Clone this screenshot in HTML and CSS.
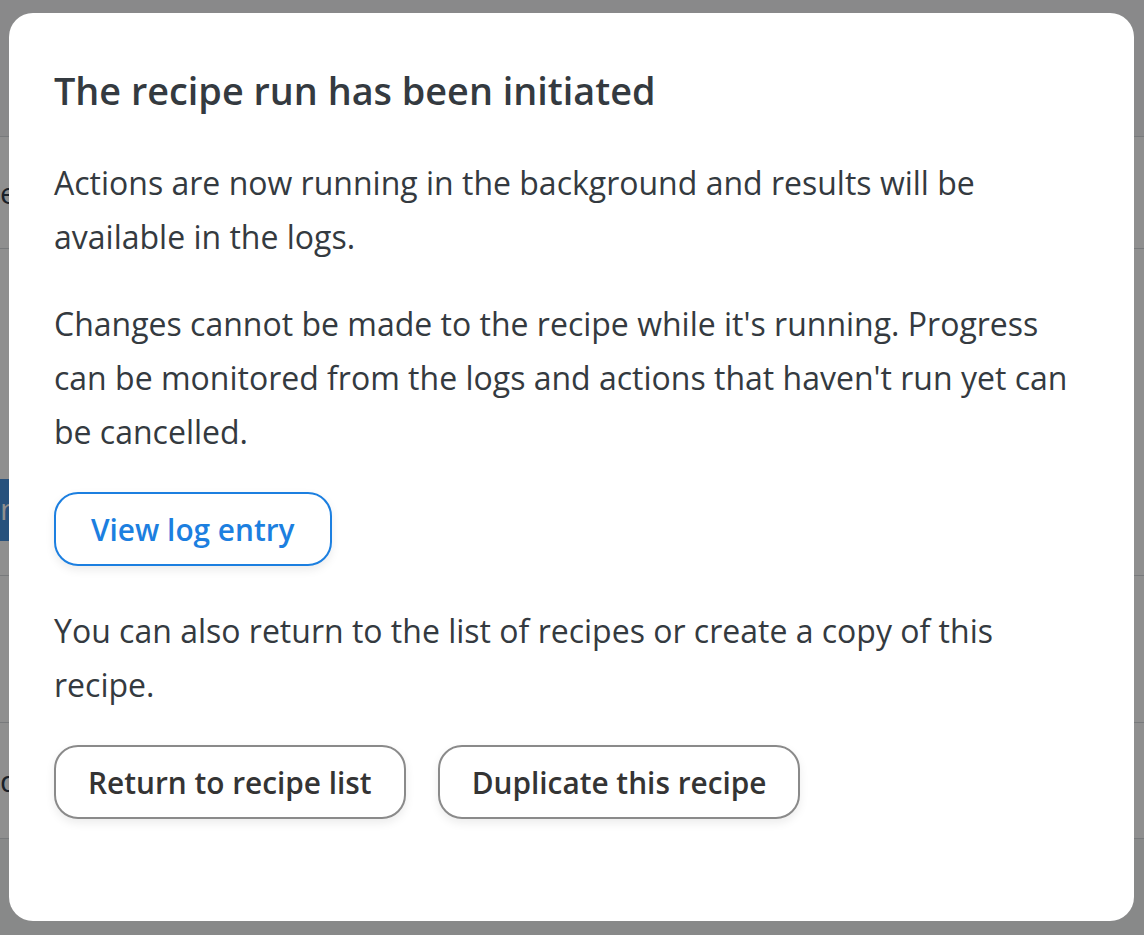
FILE: index.html
```html
<!DOCTYPE html>
<html lang="en">
<head>
<meta charset="utf-8">
<title>Recipe run initiated</title>
<link rel="stylesheet" href="styles.css">
</head>
<body>
<div class="page">
  <header class="topbar"></header>
  <section class="row row-a"><span class="row-text">e</span></section>
  <section class="row row-b"><span class="blue-btn">n</span></section>
  <section class="row row-c"></section>
  <section class="row row-d"><span class="row-text">d</span></section>
  <footer class="foot"></footer>
</div>
<div class="overlay"></div>
<div class="modal" role="dialog" aria-labelledby="dlg-title">
  <h2 id="dlg-title" class="modal-title">The recipe run has been initiated</h2>
  <p class="modal-text">Actions are now running in the background and results will be available in the logs.</p>
  <p class="modal-text">Changes cannot be made to the recipe while it's running. Progress can be monitored from the logs and actions that haven't run yet can be cancelled.</p>
  <div class="primary-row">
    <button class="btn btn-primary" type="button">View log entry</button>
  </div>
  <p class="modal-text">You can also return to the list of recipes or create a copy of this recipe.</p>
  <div class="btn-row">
    <button class="btn btn-secondary" type="button">Return to recipe list</button>
    <button class="btn btn-secondary" type="button">Duplicate this recipe</button>
  </div>
</div>
</body>
</html>
```
FILE: styles.css
```css
html, body {
  margin: 0;
  padding: 0;
  height: 100%;
}
body {
  font-family: "Open Sans", "Noto Sans", sans-serif;
  background: #ffffff;
  color: #343a40;
  overflow: hidden;
}
.page {
  display: flex;
  flex-direction: column;
  height: 935px;
}
.topbar {
  height: 136px;
  background: #f4f5f6;
  border-bottom: 1px solid #d7dadd;
  flex: none;
}
.row {
  flex: none;
  border-bottom: 1px solid #d7dadd;
  display: flex;
  box-sizing: border-box;
  font-size: 30px;
}
.row-a { height: 112px; align-items: center; }
.row-b { height: 327px; align-items: flex-start; padding-top: 230px; }
.row-c { height: 147px; }
.row-d { height: 116px; align-items: center; }
.row-text {
  margin-left: 0;
  color: #2f3a4a;
}
.blue-btn {
  display: block;
  width: 60px;
  height: 62px;
  background: #4790dd;
  color: #fff;
  line-height: 60px;
}
.foot {
  flex: 1;
  background: #f3f4f5;
}
.overlay {
  position: fixed;
  inset: 0;
  background: rgba(0, 0, 0, 0.44);
}
.modal {
  position: fixed;
  left: 9px;
  top: 13px;
  width: 1125px;
  box-sizing: border-box;
  background: #ffffff;
  border-radius: 24px;
  padding: 55px 45px 102px 45px;
}
.modal-title {
  margin: 0 0 42px 0;
  font-size: 37.8px;
  line-height: 46px;
  font-weight: 600;
  color: #343a40;
}
.modal-text {
  margin: 0 0 33px 0;
  font-size: 32px;
  line-height: 54px;
  color: #343a40;
}
.primary-row {
  display: flex;
  margin: 0 0 38px 0;
}
.btn-row {
  display: flex;
  gap: 32px;
}
.btn {
  font-family: "Open Sans", "Noto Sans", sans-serif;
  font-size: 29.8px;
  font-weight: 600;
  height: 74px;
  box-sizing: border-box;
  padding: 0 32px;
  border-radius: 24px;
  background: #ffffff;
  box-shadow: 0 4px 10px rgba(0, 0, 0, 0.08);
  cursor: pointer;
}
.btn-primary {
  border: 2px solid #1c7fe0;
  color: #1c7fe0;
  padding: 0 35px;
}
.btn-secondary {
  border: 2px solid #8a8a8a;
  color: #343434;
}
```
